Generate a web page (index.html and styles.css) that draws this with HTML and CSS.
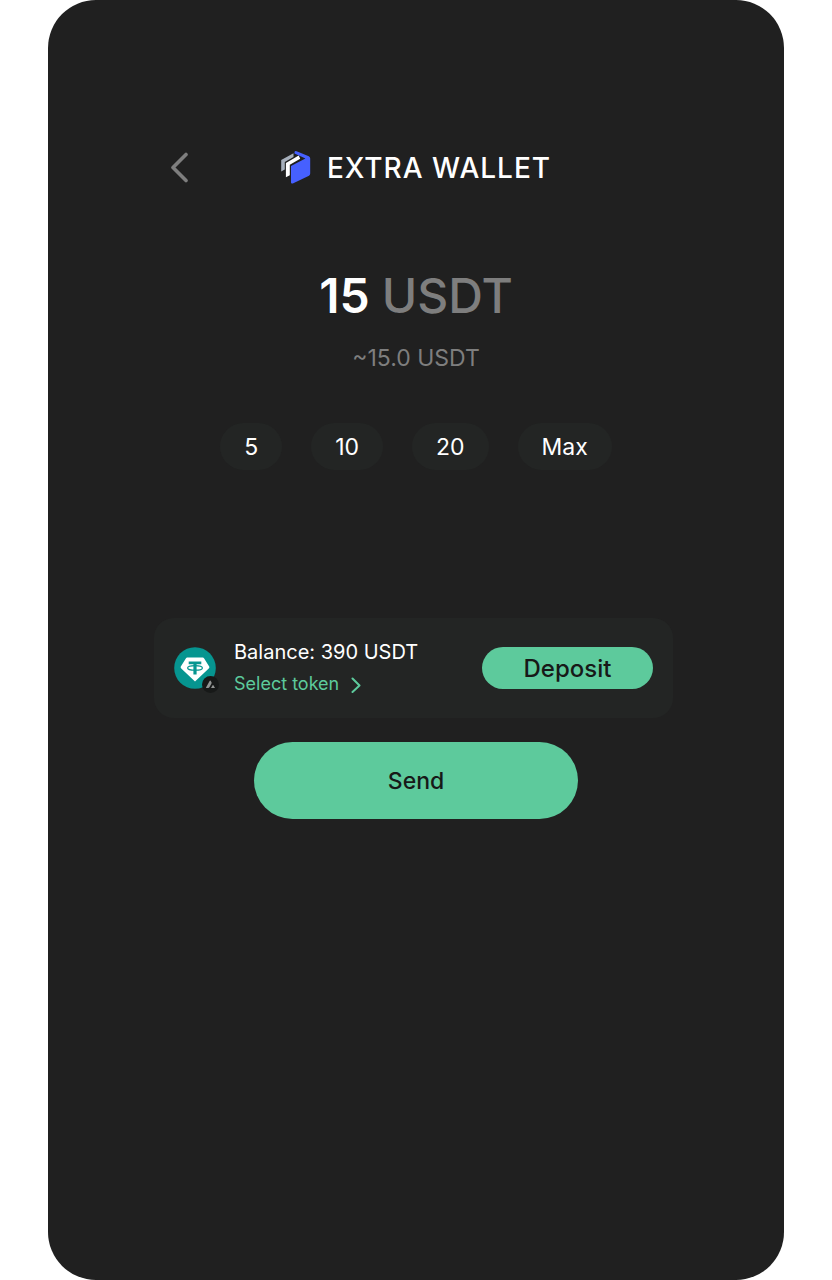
FILE: index.html
```html
<!DOCTYPE html>
<html lang="en">

<head>
    <meta charset="UTF-8">
    <meta name="viewport" content="width=device-width, initial-scale=1.0">
    <title>Extra Wallet</title>
    <link rel="stylesheet" href="styles.css">
</head>

<body>

<main class="screen">
    <header class="header">
        <button type="button" class="back-button" aria-label="Back">
            <svg width="19" height="32" viewBox="0 0 19 32">
                <path d="M16 2.5L3 15.5L16 28.5" fill="none" stroke="#7e7e7e" stroke-width="3.6" stroke-linecap="round" stroke-linejoin="round"/>
            </svg>
        </button>
        <div class="brand">
            <svg width="30" height="34" viewBox="0 0 30 34">
                <path d="M0.2 9L12.5 2.2V6L3.8 11V18.5L0.2 20.5Z" fill="#a6afbb"/>
                <path d="M4.9 12L17.7 4.6L19.2 7.8L8.8 13.8V24.3L4.9 26.2Z" fill="#fff"/>
                <path d="M13.5 1Q13.8 -0.2 15.6 0.2L27.8 5.2Q29.2 6 29.2 7.4V22.6Q29.2 24 28 24.8L11.8 32.4Q10 33 10 31.4V15L24.4 7.4L13.5 2.4Z" fill="#4660ff"/>
            </svg>
            <h1>EXTRA WALLET</h1>
        </div>
    </header>

    <!-- Amount to send -->
    <section class="amount">
        <p class="amount-value">15 <span>USDT</span></p>
        <p class="amount-estimate">~15.0 USDT</p>
    </section>

    <div class="presets">
        <button type="button">5</button>
        <button type="button">10</button>
        <button type="button">20</button>
        <button type="button">Max</button>
    </div>

    <!-- Balance and token -->
    <section class="balance-card">
        <div class="token-icon">
            <svg width="42" height="42" viewBox="0 0 42 42">
                <circle cx="21" cy="21" r="20.8" fill="#069590"/>
                <path d="M13.2 10.5H28.8Q29.6 10.5 30 11.2L35.2 19.6Q35.7 20.5 35 21.2L21 34.6L7 21.2Q6.3 20.5 6.8 19.6L12 11.2Q12.4 10.5 13.2 10.5Z" fill="#fff"/>
                <path d="M14.7 14.4H27.3V17.3H22.6V27.6H19.4V17.3H14.7Z" fill="#069590"/>
                <ellipse cx="21" cy="20.9" rx="7.4" ry="2.3" fill="none" stroke="#069590" stroke-width="1.2"/>
            </svg>
            <svg class="network-badge" width="17" height="17" viewBox="0 0 17 17">
                <circle cx="8.5" cy="8.5" r="8.5" fill="#171918"/>
                <path d="M3.9 11.8L7.6 5Q8.2 4.2 8.8 5L9.5 6.3Q9.8 7 9.4 7.7L7.4 11.2Q7 12 6.2 12H4.2ZM9 12L10.6 9.2Q11 8.6 11.4 9.2L13 12Z" fill="#929493"/>
            </svg>
        </div>
        <div class="balance-info">
            <p class="balance">Balance: 390 USDT</p>
            <a href="#" class="select-token">
                Select token
                <svg width="11" height="17" viewBox="0 0 11 17">
                    <path d="M1.5 2.5L8.5 9.5L1.5 16" fill="none" stroke="#5dca9c" stroke-width="2" stroke-linecap="round" stroke-linejoin="round"/>
                </svg>
            </a>
        </div>
        <button type="button" class="deposit-button">Deposit</button>
    </section>

    <button type="button" class="send-button">Send</button>
</main>

</body>

</html>
```

FILE: styles.css
```css
* {
    box-sizing: border-box;
}

body {
    margin: 0;
    background-color: #fff;
    color: #fff;
    font-family: Inter, "Liberation Sans", sans-serif;
}

h1, p {
    margin: 0;
}

button {
    border: none;
    padding: 0;
    font-family: inherit;
    cursor: pointer;
}

svg {
    display: block;
}

.screen {
    display: flex;
    flex-direction: column;
    min-height: 100vh;
    margin: 0 48px;
    padding: 150px 106px 48px;
    background-color: #202020;
    border-radius: 48px;
}

.header {
    display: grid;
    grid-template-columns: 1fr auto 1fr;
    align-items: center;
    height: 36px;
}

.back-button {
    justify-self: start;
    margin-left: 16px;
    background: none;
}

.brand {
    display: flex;
    align-items: center;
    gap: 16px;
}

.brand h1 {
    font-size: 28px;
    line-height: 36px;
    font-weight: 500;
    letter-spacing: 1px;
}

.amount {
    margin-top: 78px;
    text-align: center;
}

.amount-value {
    font-size: 48px;
    line-height: 64px;
    font-weight: 600;
}

.amount-value span {
    color: #7e7e7e;
    font-weight: 500;
}

.amount-estimate {
    margin-top: 14px;
    color: #7e7e7e;
    font-size: 23px;
    line-height: 32px;
}

.presets {
    display: flex;
    justify-content: center;
    gap: 29px;
    margin-top: 49px;
}

.presets button {
    height: 47px;
    padding: 0 24px;
    background-color: #232524;
    border-radius: 24px;
    color: #fff;
    font-size: 23px;
}

.balance-card {
    display: flex;
    align-items: center;
    margin: 148px 5px 0 0;
    padding: 18px 20px;
    background-color: #232524;
    border-radius: 20px;
}

.token-icon {
    position: relative;
    margin-right: 18px;
}

.network-badge {
    position: absolute;
    right: -3px;
    bottom: -4px;
}

.balance {
    font-size: 20px;
    line-height: 32px;
}

.select-token {
    display: flex;
    align-items: center;
    gap: 12px;
    color: #5dca9c;
    font-size: 18px;
    line-height: 32px;
    text-decoration: none;
}

.deposit-button {
    width: 171px;
    height: 42px;
    margin-left: auto;
    background-color: #5dca9c;
    border-radius: 21px;
    color: #171918;
    font-size: 24px;
    font-weight: 500;
}

.send-button {
    align-self: center;
    width: 324px;
    height: 77px;
    margin-top: 24px;
    background-color: #5dca9c;
    border-radius: 39px;
    color: #171918;
    font-size: 23px;
    font-weight: 500;
}
```
